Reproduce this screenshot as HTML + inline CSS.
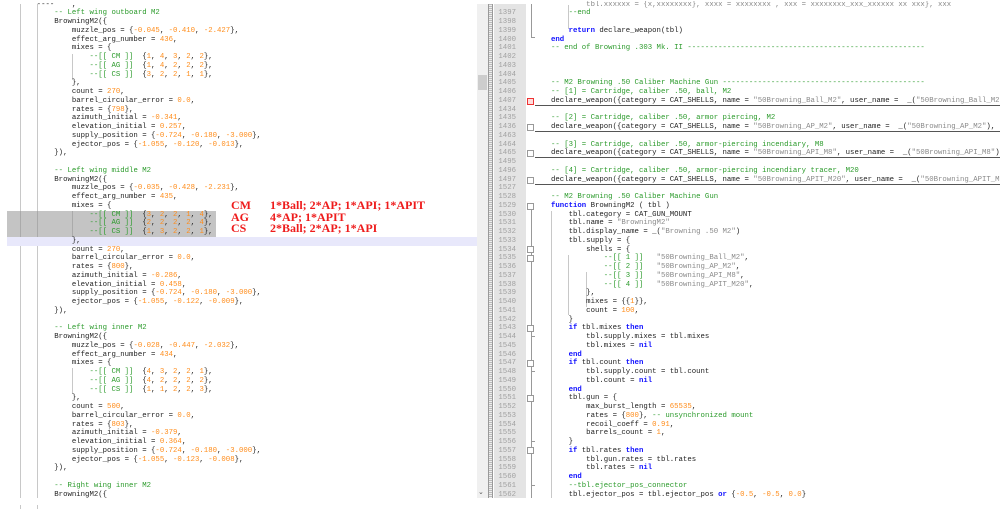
<!DOCTYPE html>
<html><head><meta charset="utf-8"><style>
*{margin:0;padding:0;box-sizing:border-box}
body{width:1000px;height:505px;background:#fff;position:relative;overflow:hidden;font-family:"Liberation Mono",monospace;font-size:7.33px;color:#222}
.pane{position:absolute;top:0;line-height:8.75px}
.l{height:8.75px;white-space:pre}
.c{color:#2a9a2a}.n{color:#ff8c1a}.s{color:#8a8a8a}.k{color:#1010ff;font-weight:bold}
.vg{position:absolute;width:1px;background:#c8c8c8}
.fb{position:absolute;left:527px;width:7px;height:7px;border:1px solid #999;background:#fff}
</style></head><body>
<div class="vg" style="left:20px;top:4px;height:505px"></div>
<div class="vg" style="left:37px;top:4px;height:505px"></div>
<div style="position:absolute;left:7px;top:210.6px;width:209px;height:26.2px;background:#c4c4c4"></div>
<div style="position:absolute;left:7px;top:236.8px;width:470px;height:8.75px;background:#e8e8fb"></div>
<div class="vg" style="left:72px;top:54px;height:26px"></div>
<div class="vg" style="left:72px;top:211px;height:26px;background:#aaa"></div>
<div class="vg" style="left:72px;top:368px;height:26px"></div>
<div class="vg" style="left:20px;top:211px;height:26px;background:#aaa"></div>
<div class="vg" style="left:37px;top:211px;height:26px;background:#aaa"></div>
<div class="pane" style="left:1.5px;top:0.55px"><div class="l">        ----    ,</div><div class="l">            <span class="c">-- Left wing outboard M2</span></div><div class="l">            BrowningM2({</div><div class="l">                muzzle_pos = {<span class="n">-0.045</span>, <span class="n">-0.410</span>, <span class="n">-2.427</span>},</div><div class="l">                effect_arg_number = <span class="n">436</span>,</div><div class="l">                mixes = {</div><div class="l">                    <span class="c">--[[ CM ]]</span>  {<span class="n">1</span>, <span class="n">4</span>, <span class="n">3</span>, <span class="n">2</span>, <span class="n">2</span>},</div><div class="l">                    <span class="c">--[[ AG ]]</span>  {<span class="n">1</span>, <span class="n">4</span>, <span class="n">2</span>, <span class="n">2</span>, <span class="n">2</span>},</div><div class="l">                    <span class="c">--[[ CS ]]</span>  {<span class="n">3</span>, <span class="n">2</span>, <span class="n">2</span>, <span class="n">1</span>, <span class="n">1</span>},</div><div class="l">                },</div><div class="l">                count = <span class="n">270</span>,</div><div class="l">                barrel_circular_error = <span class="n">0.0</span>,</div><div class="l">                rates = {<span class="n">798</span>},</div><div class="l">                azimuth_initial = <span class="n">-0.341</span>,</div><div class="l">                elevation_initial = <span class="n">0.257</span>,</div><div class="l">                supply_position = {<span class="n">-0.724</span>, <span class="n">-0.180</span>, <span class="n">-3.000</span>},</div><div class="l">                ejector_pos = {<span class="n">-1.055</span>, <span class="n">-0.120</span>, <span class="n">-0.013</span>},</div><div class="l">            }),</div><div class="l"> </div><div class="l">            <span class="c">-- Left wing middle M2</span></div><div class="l">            BrowningM2({</div><div class="l">                muzzle_pos = {<span class="n">-0.035</span>, <span class="n">-0.428</span>, <span class="n">-2.231</span>},</div><div class="l">                effect_arg_number = <span class="n">435</span>,</div><div class="l">                mixes = {</div><div class="l">                    <span class="c">--[[ CM ]]</span>  {<span class="n">3</span>, <span class="n">2</span>, <span class="n">2</span>, <span class="n">1</span>, <span class="n">4</span>},</div><div class="l">                    <span class="c">--[[ AG ]]</span>  {<span class="n">2</span>, <span class="n">2</span>, <span class="n">2</span>, <span class="n">2</span>, <span class="n">4</span>},</div><div class="l">                    <span class="c">--[[ CS ]]</span>  {<span class="n">1</span>, <span class="n">3</span>, <span class="n">2</span>, <span class="n">2</span>, <span class="n">1</span>},</div><div class="l">                },</div><div class="l">                count = <span class="n">270</span>,</div><div class="l">                barrel_circular_error = <span class="n">0.0</span>,</div><div class="l">                rates = {<span class="n">800</span>},</div><div class="l">                azimuth_initial = <span class="n">-0.286</span>,</div><div class="l">                elevation_initial = <span class="n">0.458</span>,</div><div class="l">                supply_position = {<span class="n">-0.724</span>, <span class="n">-0.180</span>, <span class="n">-3.000</span>},</div><div class="l">                ejector_pos = {<span class="n">-1.055</span>, <span class="n">-0.122</span>, <span class="n">-0.009</span>},</div><div class="l">            }),</div><div class="l"> </div><div class="l">            <span class="c">-- Left wing inner M2</span></div><div class="l">            BrowningM2({</div><div class="l">                muzzle_pos = {<span class="n">-0.028</span>, <span class="n">-0.447</span>, <span class="n">-2.032</span>},</div><div class="l">                effect_arg_number = <span class="n">434</span>,</div><div class="l">                mixes = {</div><div class="l">                    <span class="c">--[[ CM ]]</span>  {<span class="n">4</span>, <span class="n">3</span>, <span class="n">2</span>, <span class="n">2</span>, <span class="n">1</span>},</div><div class="l">                    <span class="c">--[[ AG ]]</span>  {<span class="n">4</span>, <span class="n">2</span>, <span class="n">2</span>, <span class="n">2</span>, <span class="n">2</span>},</div><div class="l">                    <span class="c">--[[ CS ]]</span>  {<span class="n">1</span>, <span class="n">1</span>, <span class="n">2</span>, <span class="n">2</span>, <span class="n">3</span>},</div><div class="l">                },</div><div class="l">                count = <span class="n">500</span>,</div><div class="l">                barrel_circular_error = <span class="n">0.0</span>,</div><div class="l">                rates = {<span class="n">803</span>},</div><div class="l">                azimuth_initial = <span class="n">-0.379</span>,</div><div class="l">                elevation_initial = <span class="n">0.364</span>,</div><div class="l">                supply_position = {<span class="n">-0.724</span>, <span class="n">-0.180</span>, <span class="n">-3.000</span>},</div><div class="l">                ejector_pos = {<span class="n">-1.055</span>, <span class="n">-0.123</span>, <span class="n">-0.008</span>},</div><div class="l">            }),</div><div class="l"> </div><div class="l">            <span class="c">-- Right wing inner M2</span></div><div class="l">            BrowningM2({</div></div>
<div style="position:absolute;left:231px;top:200px;font-family:'Liberation Serif',serif;font-weight:bold;font-size:12px;line-height:11.7px;color:#ee1c1c;white-space:pre">CM
AG
CS</div>
<div style="position:absolute;left:270px;top:200px;font-family:'Liberation Serif',serif;font-weight:bold;font-size:12px;line-height:11.7px;color:#ee1c1c;white-space:pre">1*Ball; 2*AP; 1*API; 1*APIT
4*AP; 1*APIT
2*Ball; 2*AP; 1*API</div>
<div style="position:absolute;left:477px;top:4px;width:11px;height:494px;background:#f0f0f0"></div>
<div style="position:absolute;left:478px;top:75px;width:9px;height:15px;background:#cdcdcd"></div>
<div style="position:absolute;left:478px;top:488px;font-size:7px;color:#555;font-family:'Liberation Sans',sans-serif">⌄</div>
<div style="position:absolute;left:488px;top:4px;width:5px;height:494px;background:repeating-linear-gradient(#bbb 0 1px,#eee 1px 2px);border-left:1px solid #999;border-right:1px solid #999"></div>
<div style="position:absolute;left:494px;top:4px;width:32px;height:494px;background:#e4e4e4"></div>
<div style="position:absolute;left:0;top:498px;width:1000px;height:7px;background:#fff;z-index:5"></div>
<div class="pane" style="left:494px;width:22px;text-align:right;color:#a0a0a0;top:0.55px"><div class="l"> </div><div class="l">1397</div><div class="l">1398</div><div class="l">1399</div><div class="l">1400</div><div class="l">1401</div><div class="l">1402</div><div class="l">1403</div><div class="l">1404</div><div class="l">1405</div><div class="l">1406</div><div class="l">1407</div><div class="l">1434</div><div class="l">1435</div><div class="l">1436</div><div class="l">1463</div><div class="l">1464</div><div class="l">1465</div><div class="l">1495</div><div class="l">1496</div><div class="l">1497</div><div class="l">1527</div><div class="l">1528</div><div class="l">1529</div><div class="l">1530</div><div class="l">1531</div><div class="l">1532</div><div class="l">1533</div><div class="l">1534</div><div class="l">1535</div><div class="l">1536</div><div class="l">1537</div><div class="l">1538</div><div class="l">1539</div><div class="l">1540</div><div class="l">1541</div><div class="l">1542</div><div class="l">1543</div><div class="l">1544</div><div class="l">1545</div><div class="l">1546</div><div class="l">1547</div><div class="l">1548</div><div class="l">1549</div><div class="l">1550</div><div class="l">1551</div><div class="l">1552</div><div class="l">1553</div><div class="l">1554</div><div class="l">1555</div><div class="l">1556</div><div class="l">1557</div><div class="l">1558</div><div class="l">1559</div><div class="l">1560</div><div class="l">1561</div><div class="l">1562</div></div>
<div style="position:absolute;left:531px;top:4px;width:1px;height:34px;background:#999"></div>
<div style="position:absolute;left:531px;top:37px;width:4px;height:1px;background:#999"></div>
<div style="position:absolute;left:531px;top:206px;width:1px;height:292px;background:#999"></div>
<div style="position:absolute;left:527px;top:97.5px;width:7px;height:7px;border:1px solid #e33;background:#fdd"></div>
<div class="fb" style="top:124px"></div>
<div class="fb" style="top:150px"></div>
<div class="fb" style="top:176.5px"></div>
<div style="position:absolute;left:535px;top:105px;width:465px;height:1px;background:#555"></div>
<div style="position:absolute;left:535px;top:131px;width:465px;height:1px;background:#555"></div>
<div style="position:absolute;left:535px;top:157px;width:465px;height:1px;background:#555"></div>
<div style="position:absolute;left:535px;top:184px;width:465px;height:1px;background:#555"></div>
<div class="fb" style="top:202.5px"></div>
<div class="fb" style="top:246px"></div>
<div class="fb" style="top:255px"></div>
<div class="fb" style="top:325px"></div>
<div class="fb" style="top:360px"></div>
<div class="fb" style="top:395px"></div>
<div class="fb" style="top:447px"></div>
<div style="position:absolute;left:531px;top:336px;width:4px;height:1px;background:#999"></div>
<div style="position:absolute;left:531px;top:371px;width:4px;height:1px;background:#999"></div>
<div style="position:absolute;left:531px;top:441px;width:4px;height:1px;background:#999"></div>
<div style="position:absolute;left:531px;top:485px;width:4px;height:1px;background:#999"></div>
<div class="vg" style="left:551px;top:211px;height:287px"></div>
<div class="vg" style="left:568px;top:255px;height:60px"></div>
<div class="vg" style="left:586px;top:272px;height:35px"></div>
<div class="vg" style="left:568px;top:5px;height:24px"></div>
<div class="pane" style="left:551px;width:449px;overflow:hidden;top:0.55px"><div class="l s">        tbl.xxxxxx = {x,xxxxxxxx}, xxxx = xxxxxxxx , xxx = xxxxxxxx_xxx_xxxxxx xx xxx}, xxx</div><div class="l">    <span class="c">--end</span></div><div class="l"> </div><div class="l">    <span class="k">return</span> declare_weapon(tbl)</div><div class="l"><span class="k">end</span></div><div class="l c">-- end of Browning .303 Mk. II ------------------------------------------------------</div><div class="l"> </div><div class="l"> </div><div class="l"> </div><div class="l c">-- M2 Browning .50 Caliber Machine Gun ----------------------------------------------</div><div class="l c">-- [1] = Cartridge, caliber .50, ball, M2</div><div class="l">declare_weapon({category = CAT_SHELLS, name = <span class="s">"50Browning_Ball_M2"</span>, user_name =  _(<span class="s">"50Browning_Ball_M2"</span>),</div><div class="l"> </div><div class="l c">-- [2] = Cartridge, caliber .50, armor piercing, M2</div><div class="l">declare_weapon({category = CAT_SHELLS, name = <span class="s">"50Browning_AP_M2"</span>, user_name =  _(<span class="s">"50Browning_AP_M2"</span>), </div><div class="l"> </div><div class="l c">-- [3] = Cartridge, caliber .50, armor-piercing incendiary, M8</div><div class="l">declare_weapon({category = CAT_SHELLS, name = <span class="s">"50Browning_API_M8"</span>, user_name =  _(<span class="s">"50Browning_API_M8"</span>),</div><div class="l"> </div><div class="l c">-- [4] = Cartridge, caliber .50, armor-piercing incendiary tracer, M20</div><div class="l">declare_weapon({category = CAT_SHELLS, name = <span class="s">"50Browning_APIT_M20"</span>, user_name =  _(<span class="s">"50Browning_APIT_M20"</span>),</div><div class="l"> </div><div class="l c">-- M2 Browning .50 Caliber Machine Gun</div><div class="l"><span class="k">function</span> BrowningM2 ( tbl )</div><div class="l">    tbl.category = CAT_GUN_MOUNT</div><div class="l">    tbl.name = <span class="s">"BrowningM2"</span></div><div class="l">    tbl.display_name = _(<span class="s">"Browning .50 M2"</span>)</div><div class="l">    tbl.supply = {</div><div class="l">        shells = {</div><div class="l">            <span class="c">--[[ 1 ]]</span>   <span class="s">"50Browning_Ball_M2"</span>,</div><div class="l">            <span class="c">--[[ 2 ]]</span>   <span class="s">"50Browning_AP_M2"</span>,</div><div class="l">            <span class="c">--[[ 3 ]]</span>   <span class="s">"50Browning_API_M8"</span>,</div><div class="l">            <span class="c">--[[ 4 ]]</span>   <span class="s">"50Browning_APIT_M20"</span>,</div><div class="l">        },</div><div class="l">        mixes = {{<span class="n">1</span>}},</div><div class="l">        count = <span class="n">100</span>,</div><div class="l">    }</div><div class="l">    <span class="k">if</span> tbl.mixes <span class="k">then</span></div><div class="l">        tbl.supply.mixes = tbl.mixes</div><div class="l">        tbl.mixes = <span class="k">nil</span></div><div class="l">    <span class="k">end</span></div><div class="l">    <span class="k">if</span> tbl.count <span class="k">then</span></div><div class="l">        tbl.supply.count = tbl.count</div><div class="l">        tbl.count = <span class="k">nil</span></div><div class="l">    <span class="k">end</span></div><div class="l">    tbl.gun = {</div><div class="l">        max_burst_length = <span class="n">65535</span>,</div><div class="l">        rates = {<span class="n">800</span>}, <span class="c">-- unsynchronized mount</span></div><div class="l">        recoil_coeff = <span class="n">0.91</span>,</div><div class="l">        barrels_count = <span class="n">1</span>,</div><div class="l">    }</div><div class="l">    <span class="k">if</span> tbl.rates <span class="k">then</span></div><div class="l">        tbl.gun.rates = tbl.rates</div><div class="l">        tbl.rates = <span class="k">nil</span></div><div class="l">    <span class="k">end</span></div><div class="l">    <span class="c">--tbl.ejector_pos_connector</span></div><div class="l">    tbl.ejector_pos = tbl.ejector_pos <span class="k">or</span> {<span class="n">-0.5</span>, <span class="n">-0.5</span>, <span class="n">0.0</span>}</div></div>
</body></html>
